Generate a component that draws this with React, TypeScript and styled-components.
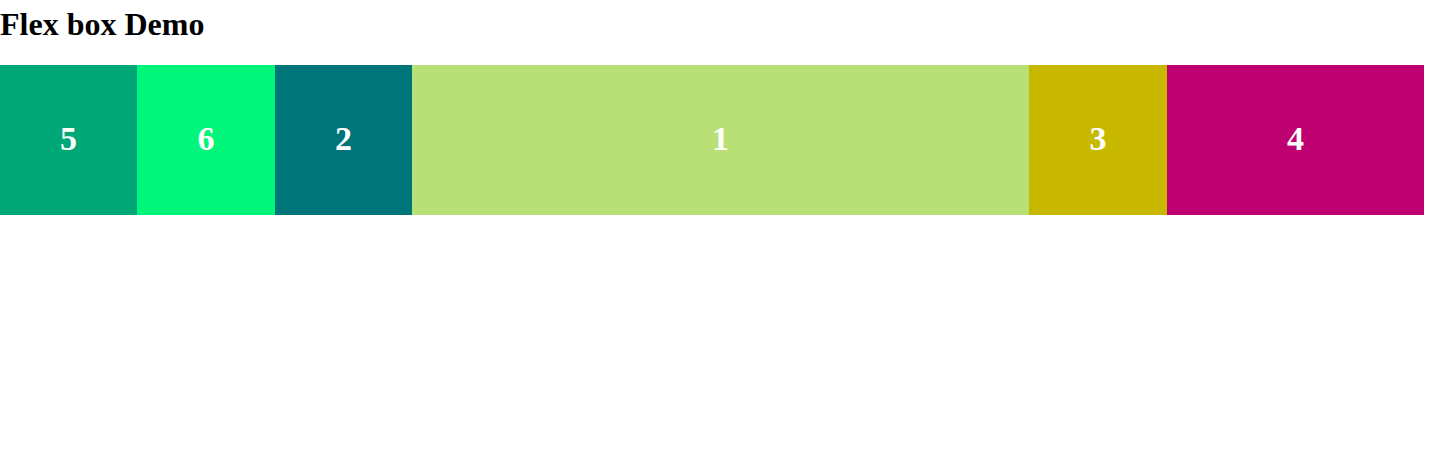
import React from "react";
import styled, { createGlobalStyle } from "styled-components";

const GlobalStyle = createGlobalStyle`
  body {
    margin: 0;
    background: #ffffff;
    font-family: "Liberation Serif", "Times New Roman", serif;
  }
`;

type Item = { label: string; color: string; grow: number };

const items: Item[] = [
  { label: "5", color: "#00a878", grow: 137 },
  { label: "6", color: "#00f67a", grow: 138 },
  { label: "2", color: "#00757a", grow: 137 },
  { label: "1", color: "#b9e077", grow: 617 },
  { label: "3", color: "#c8b900", grow: 138 },
  { label: "4", color: "#bf0070", grow: 257 },
];

export default function App() {
  return (
    <Page>
      <GlobalStyle />
      <Title>Flex box Demo</Title>
      <FlexRow>
        {items.map((item) => (
          <Box key={item.label} $color={item.color} $grow={item.grow}>
            {item.label}
          </Box>
        ))}
      </FlexRow>
    </Page>
  );
}

const Page = styled.div`
  width: 1424px;
`;

const Title = styled.h1`
  font-size: 32px;
  font-weight: 700;
  color: #000;
  margin: 6px 0 22px;
  line-height: normal;
`;

const FlexRow = styled.div`
  display: flex;
  height: 150px;
`;

const Box = styled.div<{ $color: string; $grow: number }>`
  flex: ${(p) => p.$grow} 1 0;
  background: ${(p) => p.$color};
  display: flex;
  align-items: center;
  justify-content: center;
  color: #fff;
  font-size: 34px;
  font-weight: 700;
  padding-bottom: 2px;
`;
